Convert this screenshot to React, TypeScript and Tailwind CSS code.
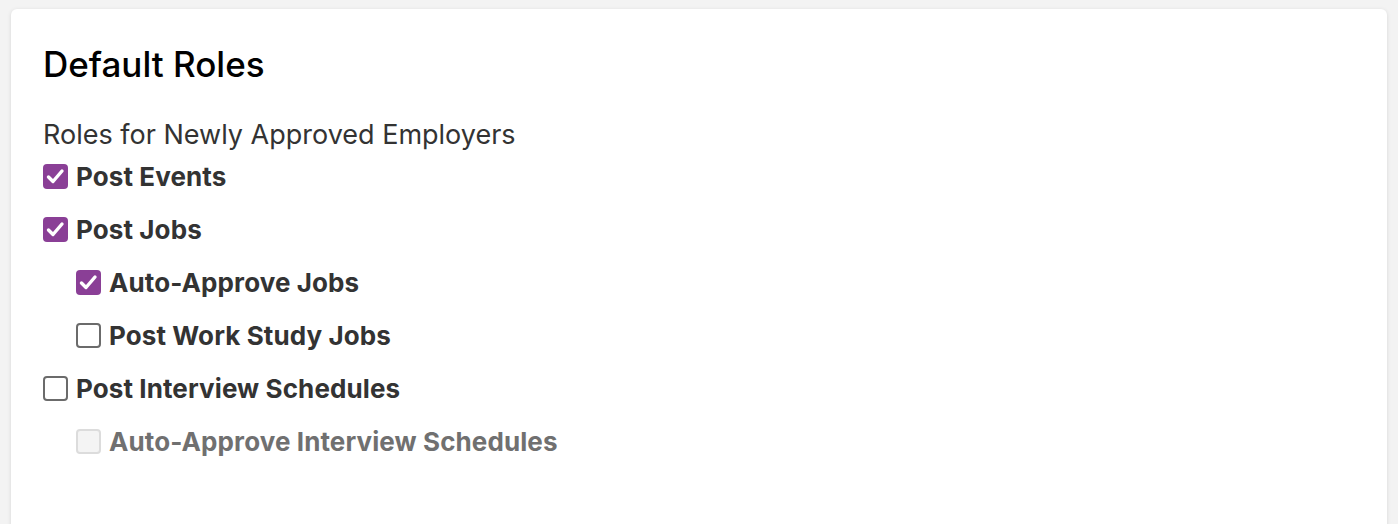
import React from "react";

type Item = { label: string; checked: boolean; disabled?: boolean; indent?: boolean };

const items: Item[] = [
  { label: "Post Events", checked: true },
  { label: "Post Jobs", checked: true },
  { label: "Auto-Approve Jobs", checked: true, indent: true },
  { label: "Post Work Study Jobs", checked: false, indent: true },
  { label: "Post Interview Schedules", checked: false },
  { label: "Auto-Approve Interview Schedules", checked: false, indent: true, disabled: true },
];

function Box({ checked, disabled }: { checked: boolean; disabled?: boolean }) {
  if (checked) {
    return (
      <span className="flex h-[25px] w-[25px] shrink-0 items-center justify-center rounded-[4px] bg-[#8a3f96]">
        <svg width="25" height="25" viewBox="0 0 25 25" fill="none">
          <path d="M5.5 13 L10 17.5 L19 7" stroke="white" strokeWidth="3.4" strokeLinecap="round" strokeLinejoin="round" />
        </svg>
      </span>
    );
  }
  if (disabled) {
    return <span className="h-[25px] w-[25px] shrink-0 rounded-[4px] border-2 border-[#dcdcdc] bg-[#f4f4f4]" />;
  }
  return <span className="h-[25px] w-[25px] shrink-0 rounded-[4px] border-2 border-[#6b6b6b] bg-white" />;
}

export default function App() {
  return (
    <div className="min-h-[524px] bg-[#f3f3f3] pl-[11px] pr-[11px] pt-[9px] font-['Inter',sans-serif]">
      <div className="h-[530px] rounded-[6px] bg-white pl-[32px] pt-[35px] shadow-[0_1px_4px_rgba(0,0,0,0.12)]">
        <h1 className="text-[35px] leading-[40px] font-medium text-black">Default Roles</h1>
        <div className="mt-[36px] text-[27px] leading-[30px] text-[#333]">Roles for Newly Approved Employers</div>
        <div className="flex flex-col">
          {items.map((it) => (
            <label
              key={it.label}
              className={`flex h-[53px] items-center gap-[8px] ${it.indent ? "pl-[33px]" : ""}`}
            >
              <Box checked={it.checked} disabled={it.disabled} />
              <span
                className={`text-[26px] font-bold leading-[30px] tracking-[0.1px] ${it.disabled ? "text-[#707070]" : "text-[#333]"}`}
              >
                {it.label}
              </span>
            </label>
          ))}
        </div>
      </div>
    </div>
  );
}
